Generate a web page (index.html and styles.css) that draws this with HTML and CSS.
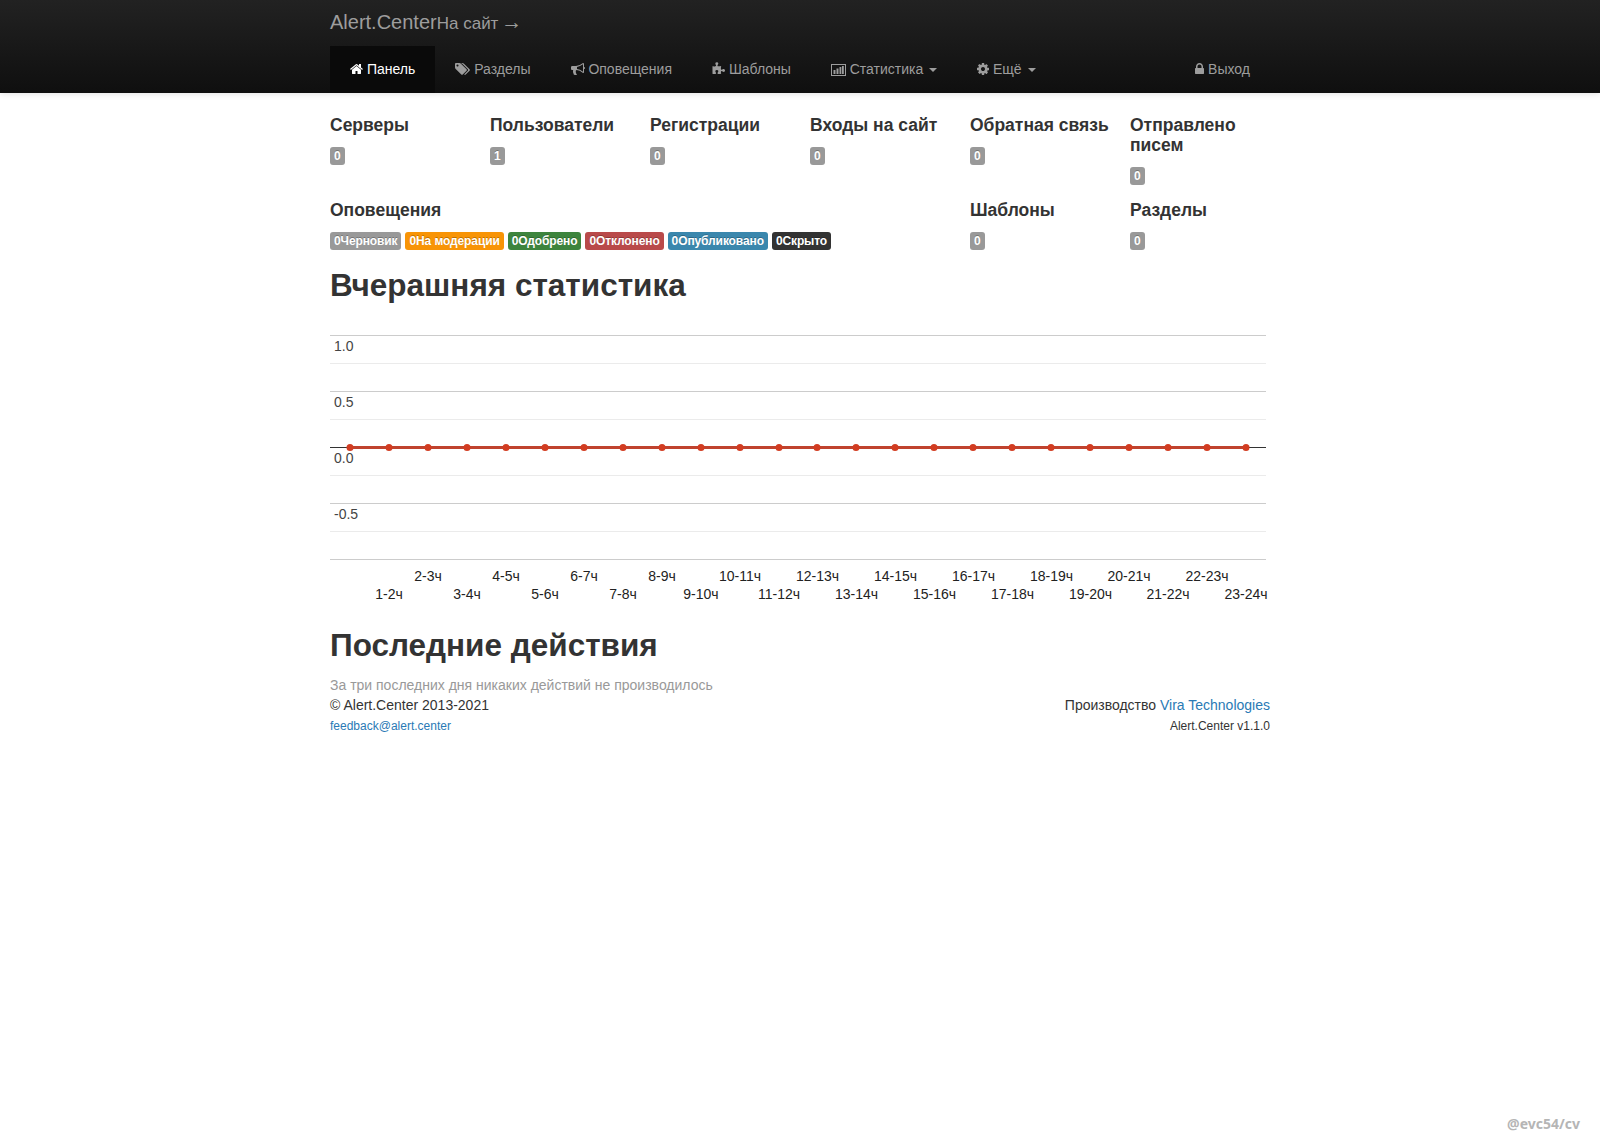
FILE: index.html
```html
<!DOCTYPE html>
<html lang="ru">
<head>
    <meta charset="UTF-8">
    <title>Alert.Center</title>
    <link rel="stylesheet" href="styles.css">
</head>
<body>
    <div class="navbar">
        <div class="container">
            <div class="brand-row">
                <a class="brand">Alert.Center</a><a class="brand-link">На сайт <span class="arrow">→</span></a>
            </div>
            <ul class="nav">
                <li class="active"><a>
                    <svg class="icon" viewBox="64 0 1664 1792" width="13" height="14"><path d="M1472 992v480q0 26-19 45t-45 19h-384v-384h-256v384h-384q-26 0-45-19t-19-45v-480q0-1 .5-3t.5-3l575-474 575 474q1 2 1 6zm223-69l-62 74q-8 9-21 11h-3q-13 0-21-7l-692-577-692 577q-12 8-24 7-13-2-21-11l-62-74q-8-10-7-23.500t11-21.500l719-599q32-26 76-26t76 26l244 204v-195q0-14 9-23t23-9h192q14 0 23 9t9 23v408l219 182q10 8 11 21.500t-7 23.500z"/></svg> Панель</a></li>
                <li><a>
                    <svg class="icon" viewBox="-64 0 1920 1792" width="15" height="14"><path d="M384 448q0-53-37.500-90.500t-90.500-37.500-90.500 37.500-37.500 90.500 37.500 90.500 90.500 37.500 90.500-37.500 37.500-90.500zm1067 576q0 53-37 90l-491 492q-39 37-91 37-53 0-90-37l-715-716q-38-37-64.500-101t-26.500-117v-416q0-52 38-90t90-38h416q53 0 117 26.500t102 64.500l715 714q37 39 37 91zm384 0q0 53-37 90l-491 492q-39 37-91 37-36 0-59-14t-53-45l470-470q37-37 37-90 0-52-37-91l-715-714q-38-38-102-64.500t-117-26.500h224q53 0 117 26.500t102 64.500l715 714q37 39 37 91z"/></svg> Разделы</a></li>
                <li><a>
                    <svg class="icon" viewBox="0 0 1792 1792" width="14" height="14"><path d="M1664 640q53 0 90.500 37.500t37.500 90.500-37.500 90.500-90.500 37.500v384q0 52-38 90t-90 38q-417-347-812-380-58 19-91 66t-31 100.500 40 92.500q-20 33-23 65.500t6 58 33.500 55 48 50 61.500 50.500q-29 58-111.500 83t-168.500 11.500-132-55.500q-7-23-29.500-87.500t-32-94.500-23-89-15-101 3.500-98.500 22-110.500h-122q-66 0-113-47t-47-113v-192q0-66 47-113t113-47h480q435 0 896-384 52 0 90 38t38 90v384zm-128 604v-954q-394 302-768 343v270q377 42 768 341z"/></svg> Оповещения</a></li>
                <li><a>
                    <svg class="icon" viewBox="0 0 1728 1792" width="13" height="14"><path d="M1728 1098q0 81-44.500 135t-123.500 54q-41 0-77.500-17.500t-59-38-56.500-38-71-17.500q-110 0-110 124 0 39 16 115t15 115v5q-22 0-33 1-34 3-97.500 11.500t-115.500 13.500-98 5q-61 0-103-26.500t-42-83.500q0-37 17.500-71t38-56.500 38-59 17.500-77.500q0-79-54-123.500t-135-44.500q-84 0-143 45.500t-59 127.500q0 43 15 83t33.500 64.500 33.500 53 15 50.500q0 45-46 89-37 35-117 35-95 0-245-24-9-2-27.500-4t-27.500-4l-13-2q-1 0-3-1-2 0-2-1v-1024q2 1 17.500 3.500t34 5 21.500 3.500q150 24 245 24 80 0 117-35 46-44 46-89 0-22-15-50.500t-33.500-53-33.500-64.500-15-83q0-82 59-127.500t144-45.500q80 0 134 44.500t54 123.500q0 41-17.500 77.500t-38 59-38 56.500-17.500 71q0 57 42 83.500t103 26.500q64 0 180-15t163-17v2q-1 2-3.500 17.500t-5 34-3.500 21.500q-24 150-24 245 0 80 35 117 44 46 89 46 22 0 50.500-15t53-33.500 64.500-33.500 83-15q82 0 127.500 59t45.500 143z"/></svg> Шаблоны</a></li>
                <li><a>
                    <svg class="icon" viewBox="0 0 15 12" width="15" height="12"><path d="M0 0h15v12H0zM1 1v10h13V1zM2.500 6h2v4h-2zM5.500 4.500h2V10h-2zM8.500 3h1.800v7H8.500zM11 2h1.800v8H11z" fill-rule="evenodd"/></svg> Статистика <span class="caret"></span></a></li>
                <li><a>
                    <svg class="icon" viewBox="128 0 1536 1792" width="12" height="14"><path d="M1152 896q0-106-75-181t-181-75-181 75-75 181 75 181 181 75 181-75 75-181zm512-109v222q0 12-8 23t-20 13l-185 28q-19 54-39 91 35 50 107 138 10 12 10 25t-9 23q-27 37-99 108t-94 71q-12 0-26-9l-138-108q-44 23-91 38-16 136-29 186-7 28-36 28h-222q-14 0-24.500-8.500t-11.500-21.500l-28-184q-49-16-90-37l-141 107q-10 9-25 9-14 0-25-11-126-114-165-168-7-10-7-23 0-12 8-23 15-21 51-66.500t54-70.500q-27-50-41-99l-183-27q-13-2-21-12.500t-8-23.500v-222q0-12 8-23t19-13l186-28q14-46 39-92-40-57-107-138-10-12-10-24 0-10 9-23 26-36 98.500-107.500t94.500-71.500q13 0 26 10l138 107q44-23 91-38 16-136 29-186 7-28 36-28h222q14 0 24.500 8.500t11.500 21.500l28 184q49 16 90 37l142-107q9-9 24-9 13 0 25 10 129 119 165 170 7 8 7 22 0 12-8 23-15 21-51 66.500t-54 70.500q26 50 41 98l183 28q13 2 21 12.500t8 23.500z"/></svg> Ещё <span class="caret"></span></a></li>
                <li class="nav-right"><a>
                    <svg class="icon" viewBox="320 0 1152 1792" width="9" height="14"><path d="M640 768h512v-192q0-106-75-181t-181-75-181 75-75 181v192zm832 96v576q0 40-28 68t-68 28h-960q-40 0-68-28t-28-68v-576q0-40 28-68t68-28h32v-192q0-184 132-316t316-132 316 132 132 316v192h32q40 0 68 28t28 68z"/></svg> Выход</a></li>
            </ul>
        </div>
    </div>

    <div class="container">
        <div class="stats">
            <div class="stat"><h4>Серверы</h4><span class="label">0</span></div>
            <div class="stat"><h4>Пользователи</h4><span class="label">1</span></div>
            <div class="stat"><h4>Регистрации</h4><span class="label">0</span></div>
            <div class="stat"><h4>Входы на сайт</h4><span class="label">0</span></div>
            <div class="stat"><h4>Обратная связь</h4><span class="label">0</span></div>
            <div class="stat"><h4>Отправлено писем</h4><span class="label">0</span></div>
            <div class="stat stat-wide">
                <h4>Оповещения</h4>
                <div class="labels">
                    <span class="label">0Черновик</span>
                    <span class="label label-warning">0На модерации</span>
                    <span class="label label-success">0Одобрено</span>
                    <span class="label label-danger">0Отклонено</span>
                    <span class="label label-primary">0Опубликовано</span>
                    <span class="label label-dark">0Скрыто</span>
                </div>
            </div>
            <div class="stat"><h4>Шаблоны</h4><span class="label">0</span></div>
            <div class="stat"><h4>Разделы</h4><span class="label">0</span></div>
        </div>

        <h2 class="stats-title">Вчерашняя статистика</h2>

        <svg class="chart" width="936" height="280" viewBox="0 0 936 280">
            <g class="grid-minor">
                <line x1="0" x2="936" y1="35.500" y2="35.500"/>
                <line x1="0" x2="936" y1="91.500" y2="91.500"/>
                <line x1="0" x2="936" y1="147.500" y2="147.500"/>
                <line x1="0" x2="936" y1="203.500" y2="203.500"/>
            </g>
            <g class="grid-major">
                <line x1="0" x2="936" y1="7.500" y2="7.500"/>
                <line x1="0" x2="936" y1="63.500" y2="63.500"/>
                <line x1="0" x2="936" y1="175.500" y2="175.500"/>
                <line x1="0" x2="936" y1="231.500" y2="231.500"/>
            </g>
            <line class="baseline" x1="0" x2="936" y1="119.500" y2="119.500"/>
            <g class="y-labels">
                <text x="4" y="23">1.0</text>
                <text x="4" y="79">0.5</text>
                <text x="4" y="135">0.0</text>
                <text x="4" y="191">-0.5</text>
            </g>
            <line class="series" x1="20" x2="916" y1="119.500" y2="119.500"/>
            <g class="points">
                <circle cx="20" cy="119.500" r="3.500"/>
                <circle cx="59" cy="119.500" r="3.500"/>
                <circle cx="98" cy="119.500" r="3.500"/>
                <circle cx="137" cy="119.500" r="3.500"/>
                <circle cx="176" cy="119.500" r="3.500"/>
                <circle cx="215" cy="119.500" r="3.500"/>
                <circle cx="254" cy="119.500" r="3.500"/>
                <circle cx="293" cy="119.500" r="3.500"/>
                <circle cx="332" cy="119.500" r="3.500"/>
                <circle cx="371" cy="119.500" r="3.500"/>
                <circle cx="410" cy="119.500" r="3.500"/>
                <circle cx="449" cy="119.500" r="3.500"/>
                <circle cx="487" cy="119.500" r="3.500"/>
                <circle cx="526" cy="119.500" r="3.500"/>
                <circle cx="565" cy="119.500" r="3.500"/>
                <circle cx="604" cy="119.500" r="3.500"/>
                <circle cx="643" cy="119.500" r="3.500"/>
                <circle cx="682" cy="119.500" r="3.500"/>
                <circle cx="721" cy="119.500" r="3.500"/>
                <circle cx="760" cy="119.500" r="3.500"/>
                <circle cx="799" cy="119.500" r="3.500"/>
                <circle cx="838" cy="119.500" r="3.500"/>
                <circle cx="877" cy="119.500" r="3.500"/>
                <circle cx="916" cy="119.500" r="3.500"/>
            </g>
            <g class="x-labels">
                <text x="59" y="271">1-2ч</text>
                <text x="98" y="253">2-3ч</text>
                <text x="137" y="271">3-4ч</text>
                <text x="176" y="253">4-5ч</text>
                <text x="215" y="271">5-6ч</text>
                <text x="254" y="253">6-7ч</text>
                <text x="293" y="271">7-8ч</text>
                <text x="332" y="253">8-9ч</text>
                <text x="371" y="271">9-10ч</text>
                <text x="410" y="253">10-11ч</text>
                <text x="449" y="271">11-12ч</text>
                <text x="487.500" y="253">12-13ч</text>
                <text x="526.500" y="271">13-14ч</text>
                <text x="565.500" y="253">14-15ч</text>
                <text x="604.500" y="271">15-16ч</text>
                <text x="643.500" y="253">16-17ч</text>
                <text x="682.500" y="271">17-18ч</text>
                <text x="721.500" y="253">18-19ч</text>
                <text x="760.500" y="271">19-20ч</text>
                <text x="799" y="253">20-21ч</text>
                <text x="838" y="271">21-22ч</text>
                <text x="877" y="253">22-23ч</text>
                <text x="916" y="271">23-24ч</text>
            </g>
        </svg>

        <h2 class="actions-title">Последние действия</h2>
        <p class="muted">За три последних дня никаких действий не производилось</p>

        <div class="footer">
            <div>
                <div>© Alert.Center 2013-2021</div>
                <a class="small">feedback@alert.center</a>
            </div>
            <div class="footer-right">
                <div>Производство <a>Vira Technologies</a></div>
                <span class="small">Alert.Center v1.1.0</span>
            </div>
        </div>
    </div>

    <div class="watermark">@evc54/cv</div>
</body>
</html>
```

FILE: styles.css
```css
* {
    box-sizing: border-box;
}
body {
    margin: 0;
    min-height: 1140px;
    font-family: "Liberation Sans", Arial, sans-serif;
    font-size: 14px;
    line-height: 20px;
    color: #333;
    background: #fff;
}
a {
    color: #2a7ab5;
}
.container {
    width: 940px;
    margin: 0 auto;
}

/* navbar */
.navbar {
    height: 93px;
    background: linear-gradient(to bottom, #222, #0f0f0f);
    box-shadow: 0 1px 6px rgba(0,0,0,0.12);
}
.brand-row {
    height: 46px;
    padding-top: 11px;
    display: flex;
    align-items: baseline;
}
.brand {
    font-size: 20px;
    color: #9d9d9d;
}
.brand-link {
    font-size: 17px;
    color: #9d9d9d;
}
.arrow {
    margin-left: -2px;
    font-size: 21px;
    line-height: 1;
}
.nav {
    display: flex;
    margin: 0;
    padding: 0;
    list-style: none;
}
.nav a {
    display: block;
    height: 47px;
    padding: 13px 20px;
    color: #9d9d9d;
}
.nav .active a {
    color: #fff;
    background: #0a0a0a;
}
.nav-right {
    margin-left: auto;
}
.icon {
    fill: currentColor;
    vertical-align: -2px;
}
.caret {
    display: inline-block;
    width: 0;
    height: 0;
    margin-left: 2px;
    vertical-align: middle;
    border-top: 4px solid;
    border-right: 4px solid transparent;
    border-left: 4px solid transparent;
}

/* stats */
.stats {
    display: grid;
    grid-template-columns: repeat(6, 160px);
    padding-top: 12px;
}
.stat {
    padding-right: 15px;
    padding-bottom: 3px;
}
.stat-wide {
    grid-column: span 4;
}
h4 {
    margin: 10px 0 12px;
    font-size: 17.500px;
    line-height: 20px;
    font-weight: bold;
}
.label {
    display: inline-block;
    padding: 2px 4px;
    font-size: 12px;
    letter-spacing: -0.11px;
    line-height: 14px;
    font-weight: bold;
    color: #fff;
    background: #999;
    border-radius: 3px;
    vertical-align: top;
    text-shadow: 0 -1px 0 rgba(0,0,0,0.25);
}
.labels {
    display: flex;
    gap: 4px;
    white-space: nowrap;
}
.label-warning {
    background: #f89406;
}
.label-success {
    background: #3d843d;
}
.label-danger {
    background: #b94a4a;
}
.label-primary {
    background: #3a87ad;
}
.label-dark {
    background: #333;
}

h2 {
    margin: 10px 0;
    font-size: 31.500px;
    line-height: 35px;
    font-weight: bold;
}
.stats-title {
    margin-top: 13px;
}

/* chart */
.chart {
    display: block;
    margin-top: 25px;
    overflow: visible;
}
.grid-minor line {
    stroke: #ebebeb;
}
.grid-major line {
    stroke: #ccc;
}
.baseline {
    stroke: #333;
}
.series {
    stroke: #c0432f;
    stroke-width: 3px;
}
.points circle {
    fill: #d23c21;
}
.y-labels text {
    font-size: 14px;
    fill: #444;
}
.x-labels text {
    font-size: 14px;
    fill: #222;
    text-anchor: middle;
}

.actions-title {
    margin-top: 20px;
    margin-bottom: 12px;
}
.muted {
    margin: 0;
    color: #999;
}

/* footer */
.footer {
    display: flex;
    justify-content: space-between;
}
.footer-right {
    text-align: right;
}
.small {
    font-size: 12px;
}

.watermark {
    position: absolute;
    right: 20px;
    top: 1114px;
    font-family: "Noto Sans", sans-serif;
    font-size: 14px;
    font-weight: bold;
    color: #b5b5b5;
}
```
